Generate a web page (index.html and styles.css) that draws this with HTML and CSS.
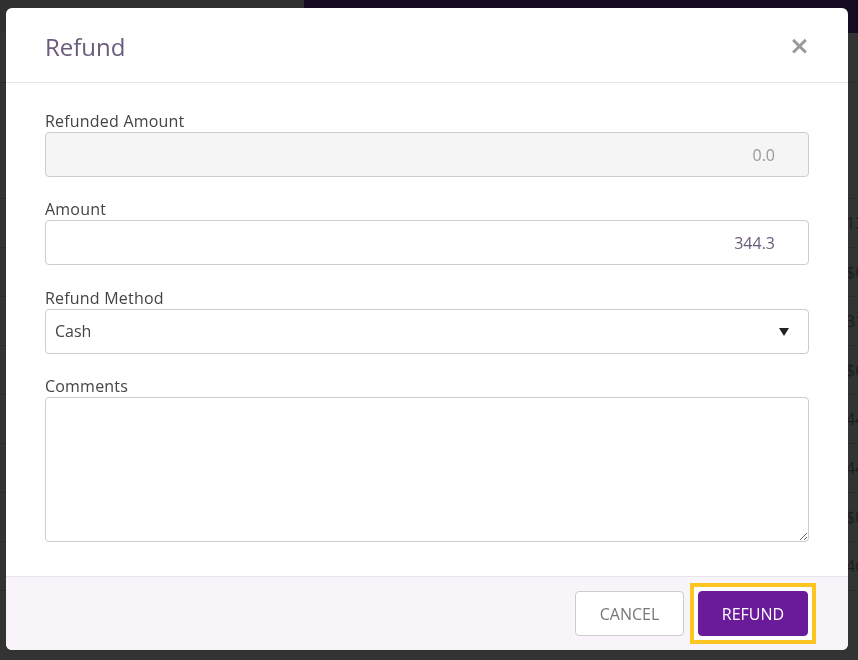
FILE: index.html
```html
<!DOCTYPE html>
<html lang="en">
<head>
    <meta charset="UTF-8">
    <title>Refund</title>
    <link rel="stylesheet" href="styles.css">
</head>
<body>
<div class="page">
    <div class="topbar">
        <div class="topbar-left"></div>
        <div class="topbar-right"></div>
    </div>
    <div class="subbar"></div>
    <div class="rows">
        <div class="row"><span class="cell">13</span></div>
        <div class="row"><span class="cell">$6</span></div>
        <div class="row"><span class="cell">31</span></div>
        <div class="row"><span class="cell">$6</span></div>
        <div class="row"><span class="cell">44</span></div>
        <div class="row"><span class="cell">44</span></div>
        <div class="row"><span class="cell">$0</span></div>
        <div class="row"><span class="cell">46</span></div>
        <div class="row"><span class="cell"></span></div>
    </div>
</div>

<div class="modal">
    <div class="modal-header">
        <h4 class="modal-title">Refund</h4>
        <span class="modal-close">&times;</span>
    </div>
    <div class="modal-body">
        <div class="form-group">
            <label>Refunded Amount</label>
            <input class="form-control num" type="text" value="0.0" disabled>
        </div>
        <div class="form-group">
            <label>Amount</label>
            <input class="form-control num amount" type="text" value="344.3">
        </div>
        <div class="form-group">
            <label>Refund Method</label>
            <div class="form-control select">
                <span>Cash</span>
                <span class="caret"></span>
            </div>
        </div>
        <div class="form-group">
            <label>Comments</label>
            <textarea class="form-control comments"></textarea>
        </div>
    </div>
    <div class="modal-footer">
        <button class="btn btn-default">CANCEL</button>
        <span class="focus-ring"><button class="btn btn-primary">REFUND</button></span>
    </div>
</div>
</body>
</html>
```

FILE: styles.css
```css
html, body {
    margin: 0;
    height: 100%;
}

body {
    background: #333;
    font-family: "Open Sans", "Liberation Sans", sans-serif;
    overflow: hidden;
}

/* dimmed page behind the dialog */
.topbar {
    display: flex;
    height: 33px;
}

.topbar-left {
    width: 304px;
    background: #303030;
}

.topbar-right {
    flex: 1;
    background: #150a1f;
}

.subbar {
    height: 49px;
    border-bottom: 1px solid #2b2b2b;
}

.rows {
    padding-top: 115px;
}

.row {
    height: 48px;
    border-top: 1px solid #2b2b2b;
    display: flex;
    align-items: center;
}

.cell {
    margin-left: 846px;
    font-size: 16px;
    color: #1c1c1c;
}

/* dialog */
.modal {
    position: fixed;
    top: 8px;
    left: 6px;
    width: 842px;
    height: 642px;
    background: #fff;
    border-radius: 6px;
    overflow: hidden;
    display: flex;
    flex-direction: column;
}

.modal-header {
    height: 74px;
    border-bottom: 1px solid #e5e5e5;
    padding: 0 39px;
    display: flex;
    align-items: center;
    justify-content: space-between;
}

.modal-title {
    margin: 0;
    padding-top: 2px;
    font-size: 24px;
    font-weight: normal;
    color: #6c5a7c;
}

.modal-close {
    font-family: "DejaVu Sans", sans-serif;
    font-size: 25px;
    font-weight: bold;
    color: #9a9a9a;
    margin-right: -1px;
    padding-top: 1px;
}

.modal-body {
    padding: 27px 39px 0;
    flex: 1;
}

.form-group {
    margin-bottom: 21.4px;
}

.form-group label {
    display: block;
    height: 22px;
    line-height: 22px;
    font-size: 16px;
    color: #444;
    letter-spacing: 0.2px;
}

.form-control {
    box-sizing: border-box;
    display: block;
    width: 100%;
    height: 45px;
    margin: 0;
    padding: 0 33px 0 9px;
    border: 1px solid #ccc;
    border-radius: 4px;
    background: #fff;
    font-family: "Open Sans", "Liberation Sans", sans-serif;
    font-size: 16px;
    color: #444;
}

.form-control.num {
    text-align: right;
}

.form-control:disabled {
    background: #f5f5f5;
    color: #999;
    -webkit-text-fill-color: #999;
    opacity: 1;
}

.form-control.amount {
    color: #6c5a7c;
}

.select {
    display: flex;
    align-items: center;
    justify-content: space-between;
    padding-right: 19px;
}

.caret {
    width: 0;
    height: 0;
    border-left: 5px solid transparent;
    border-right: 5px solid transparent;
    border-top: 8px solid #222;
    margin-top: 1px;
}

.comments {
    height: 145px;
    resize: vertical;
    padding: 8px 9px;
}

.modal-footer {
    height: 74px;
    box-sizing: border-box;
    border-top: 1px solid #e8e4ec;
    background: #f8f4fa;
    padding: 0 32px 0 0;
    display: flex;
    align-items: center;
    justify-content: flex-end;
    gap: 6px;
}

.btn {
    display: block;
    height: 45px;
    margin: 0;
    border-radius: 4px;
    font-family: "Open Sans", "Liberation Sans", sans-serif;
    font-size: 16px;
    cursor: pointer;
}

.btn-default {
    width: 109px;
    background: #fff;
    border: 1px solid #ccc;
    color: #777;
}

.focus-ring {
    display: block;
    padding: 4px;
    border: 4px solid #fdc521;
    background: #fff;
}

.btn-primary {
    width: 110px;
    background: #6a1b9a;
    border: 1px solid #6a1b9a;
    color: #fff;
}
```
